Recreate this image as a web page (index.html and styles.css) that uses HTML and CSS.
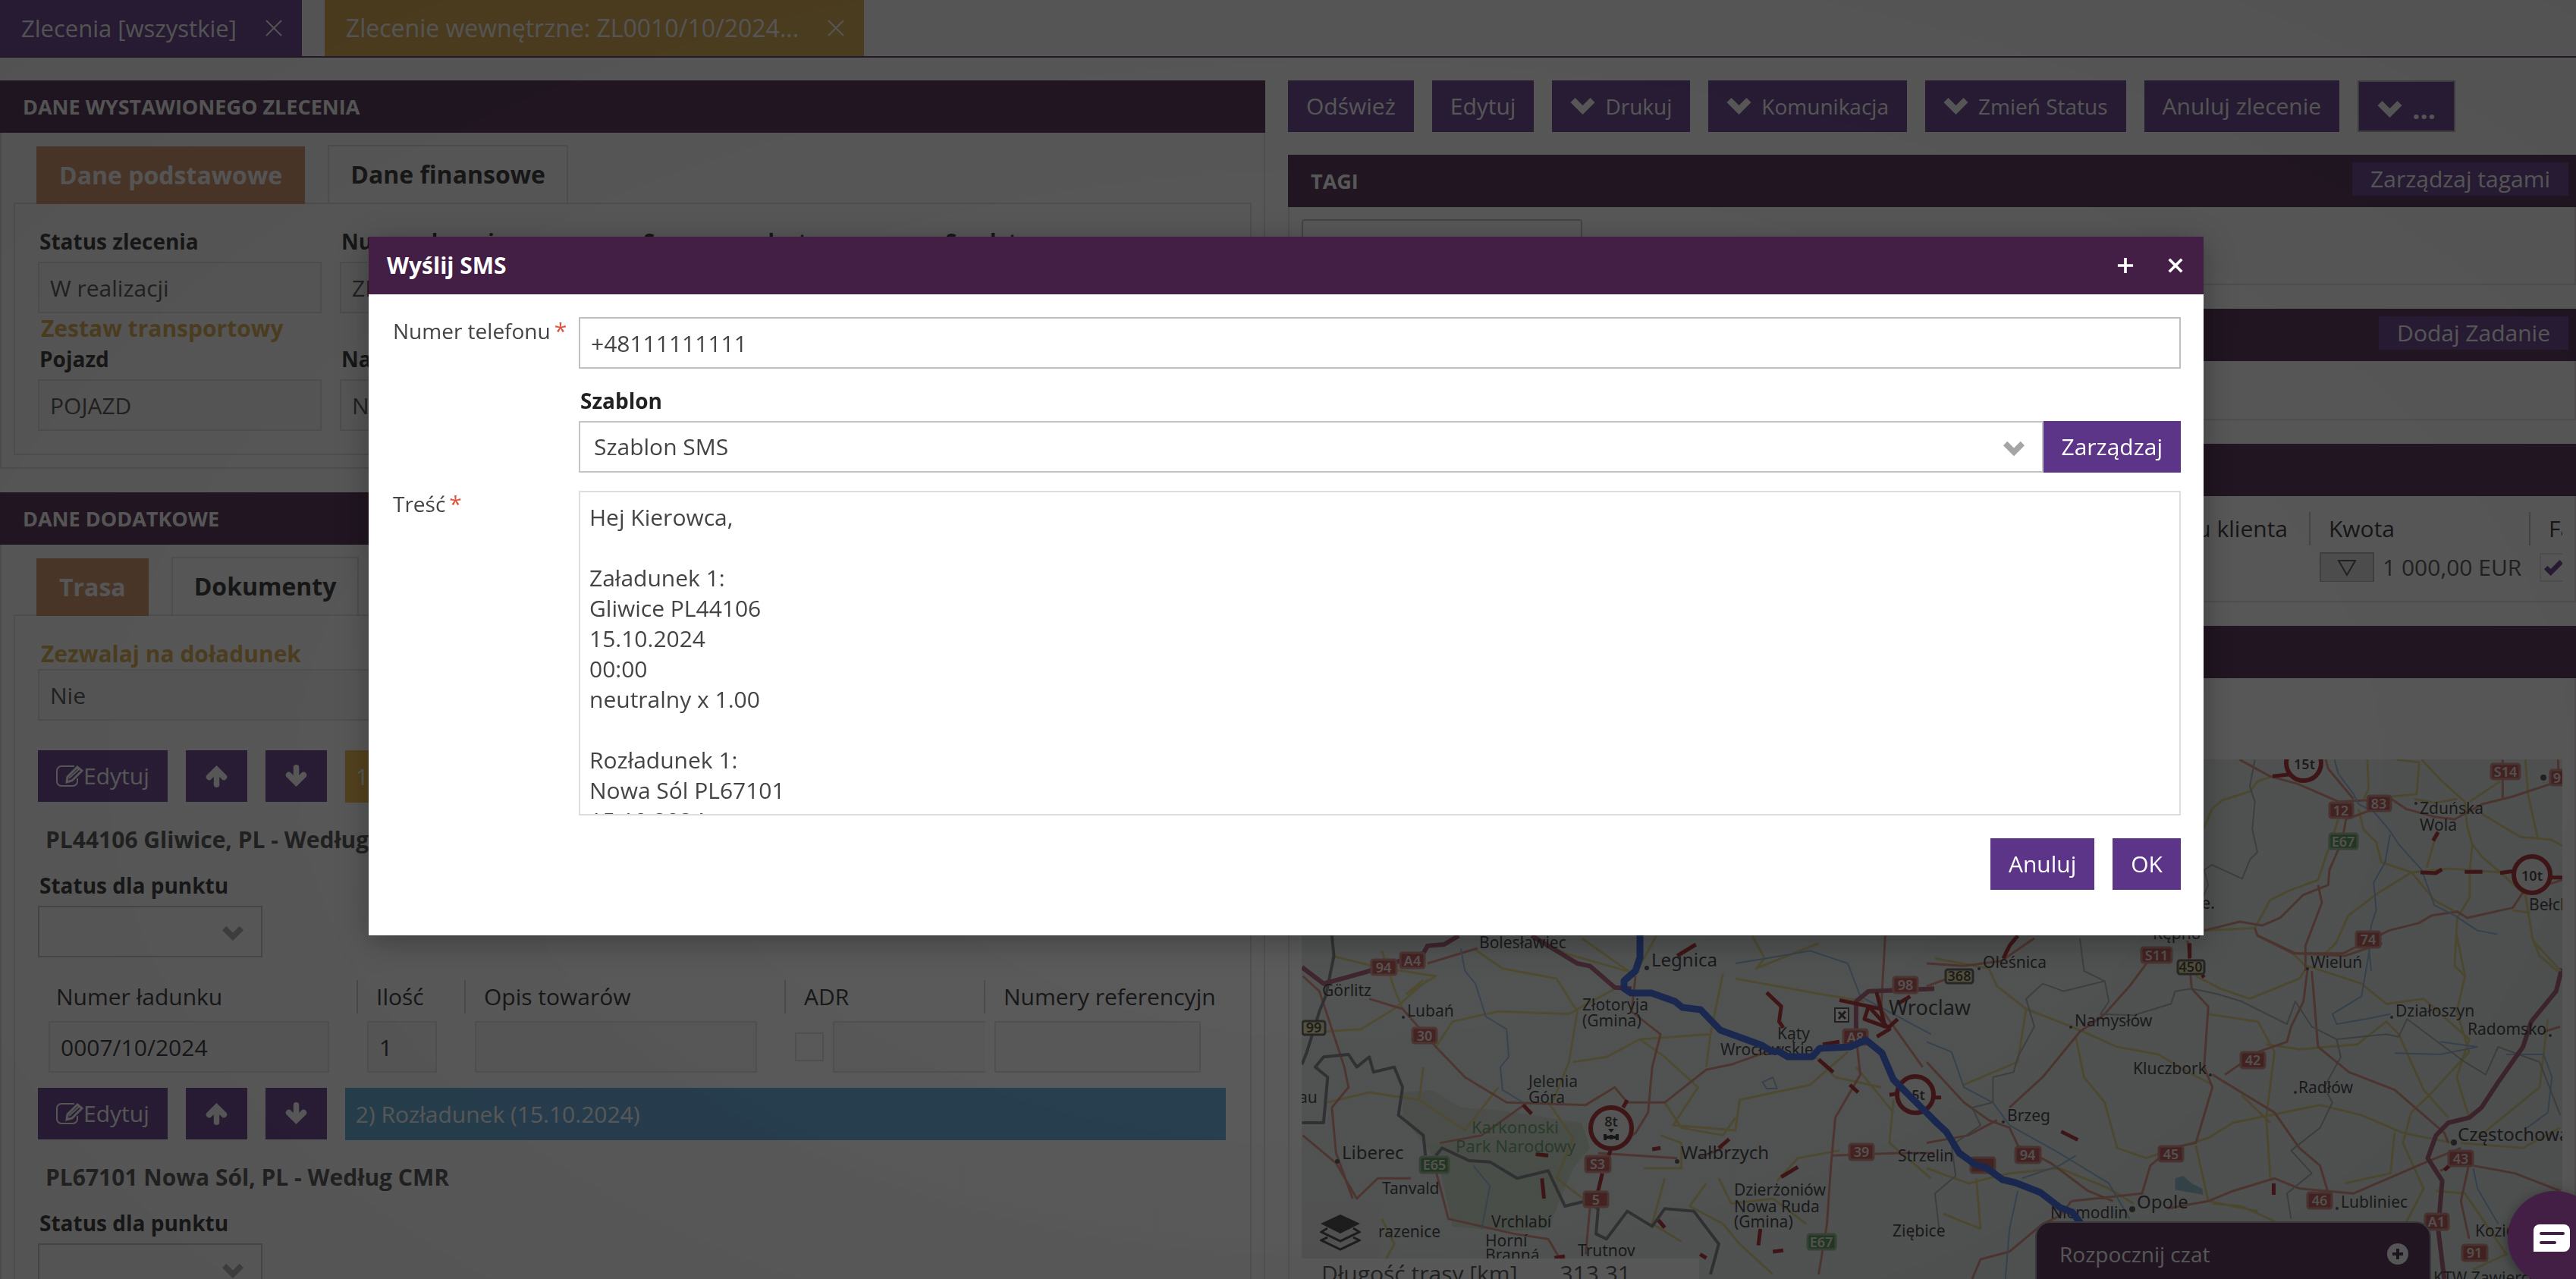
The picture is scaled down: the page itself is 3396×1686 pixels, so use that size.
FILE: index.html
```html
<!DOCTYPE html>
<html lang="pl">
<head>
<meta charset="utf-8">
<title>Zlecenie wewnętrzne ZL0010/10/2024</title>
<meta name="viewport" content="width=device-width, initial-scale=1">
<link rel="stylesheet" href="styles.css">
</head>
<body>
<svg class="symbols" aria-hidden="true">
  <symbol id="i-chevron" viewBox="0 0 32 24"><path d="M3 4 16 17 29 4" fill="none" stroke="currentColor" stroke-width="8.5"/></symbol>
  <symbol id="i-up" viewBox="0 0 32 32"><path d="M16 28V10" stroke="currentColor" stroke-width="8" stroke-linecap="round"/><path d="M16 1 30 15c3 4-3 9-6 6l-8-8-8 8c-3 3-9-2-6-6z" fill="currentColor"/></symbol>
  <symbol id="i-down" viewBox="0 0 32 32"><path d="M16 4V22" stroke="currentColor" stroke-width="8" stroke-linecap="round"/><path d="M16 31 30 17c3-4-3-9-6-6l-8 8-8-8c-3-3-9 2-6 6z" fill="currentColor"/></symbol>
  <symbol id="i-edit" viewBox="0 0 36 30"><path d="M24 2H7a6 6 0 0 0-6 6v14a6 6 0 0 0 6 6h15a6 6 0 0 0 6-6v-4" fill="none" stroke="currentColor" stroke-width="2"/><path d="M15 16 28 3l6 5-13 13-7 2z" fill="none" stroke="currentColor" stroke-width="3"/><path d="m17 18 13-12" stroke="currentColor" stroke-width="2"/></symbol>
  <symbol id="i-cross" viewBox="0 0 24 24"><path d="M2 2 22 22M22 2 2 22" stroke="currentColor" stroke-width="2"/></symbol>
</svg>

<nav class="doc-tabs">
  <a class="doc-tab" href="#list">Zlecenia [wszystkie]<svg class="doc-close"><use href="#i-cross"/></svg></a>
  <a class="doc-tab doc-tab-gold" href="#order">Zlecenie wewnętrzne: ZL0010/10/2024...<svg class="doc-close"><use href="#i-cross"/></svg></a>
</nav>

<main class="columns">
  <div class="column">
    <section class="panel">
      <h2 class="panel-head">DANE WYSTAWIONEGO ZLECENIA</h2>
      <div class="panel-body">
        <div class="tabs"><a class="tab tab-active" href="#basic">Dane podstawowe</a><a class="tab" href="#finance">Dane finansowe</a></div>
        <div class="inner">
          <div class="fields">
            <div class="field"><label class="label" for="f1">Status zlecenia</label><input class="input" id="f1" value="W realizacji" readonly></div>
            <div class="field"><label class="label" for="f2">Numer zlecenia</label><input class="input" id="f2" value="ZL0010/10/2024" readonly></div>
            <div class="field"><label class="label" for="f3">Suma zaw. dostaw</label><input class="input" id="f3" readonly></div>
            <div class="field"><label class="label" for="f4">Spedytor</label><input class="input" id="f4" readonly></div>
          </div>
          <h3 class="gold">Zestaw transportowy</h3>
          <div class="fields">
            <div class="field"><label class="label" for="f5">Pojazd</label><input class="input" id="f5" value="POJAZD" readonly></div>
            <div class="field"><label class="label" for="f6">Naczepa</label><input class="input" id="f6" value="NACZEPA" readonly></div>
          </div>
        </div>
      </div>
    </section>

    <section class="panel">
      <h2 class="panel-head">DANE DODATKOWE</h2>
      <div class="panel-body">
        <div class="tabs"><a class="tab tab-active" href="#route">Trasa</a><a class="tab" href="#docs">Dokumenty</a></div>
        <div class="inner">
          <label class="gold gold-label" for="f7">Zezwalaj na doładunek</label>
          <input class="input" id="f7" value="Nie" readonly>
          <div class="stop stop-first">
            <div class="stop-bar">
              <button class="btn" type="button"><svg class="ico-edit"><use href="#i-edit"/></svg>Edytuj</button>
              <button class="btn" type="button" aria-label="W górę"><svg class="ico-arrow"><use href="#i-up"/></svg></button>
              <button class="btn" type="button" aria-label="W dół"><svg class="ico-arrow"><use href="#i-down"/></svg></button>
              <div class="stop-title stop-load">1) Załadunek (15.10.2024)</div>
            </div>
            <p class="place">PL44106 Gliwice, PL - Według CMR</p>
            <label class="label" for="s1">Status dla punktu</label>
            <div class="select select-short"><select id="s1"><option></option></select><svg class="caret"><use href="#i-chevron"/></svg></div>
            <table class="goods">
              <colgroup><col class="g1"><col class="g2"><col class="g1"><col class="g4"><col></colgroup>
              <thead><tr><th>Numer ładunku</th><th>Ilość</th><th>Opis towarów</th><th>ADR</th><th>Numery referencyjn</th></tr></thead>
              <tbody><tr>
                <td><input class="input w-num" aria-label="Numer ładunku" value="0007/10/2024" readonly></td>
                <td><input class="input w-qty" aria-label="Ilość" value="1" readonly></td>
                <td><input class="input w-desc" aria-label="Opis towarów" readonly></td>
                <td><div class="adr"><input class="check" type="checkbox" aria-label="ADR"><input class="input w-adr" aria-label="Klasa ADR" readonly></div></td>
                <td><input class="input w-ref" aria-label="Numery referencyjne" readonly></td>
              </tr></tbody>
            </table>
          </div>
          <div class="stop">
            <div class="stop-bar">
              <button class="btn" type="button"><svg class="ico-edit"><use href="#i-edit"/></svg>Edytuj</button>
              <button class="btn" type="button" aria-label="W górę"><svg class="ico-arrow"><use href="#i-up"/></svg></button>
              <button class="btn" type="button" aria-label="W dół"><svg class="ico-arrow"><use href="#i-down"/></svg></button>
              <div class="stop-title stop-unload">2) Rozładunek (15.10.2024)</div>
            </div>
            <p class="place">PL67101 Nowa Sól, PL - Według CMR</p>
            <label class="label" for="s2">Status dla punktu</label>
            <div class="select select-short"><select id="s2"><option></option></select><svg class="caret"><use href="#i-chevron"/></svg></div>
          </div>
        </div>
      </div>
    </section>
  </div>

  <div class="column">
    <div class="toolbar">
      <button class="btn" type="button">Odśwież</button>
      <button class="btn" type="button">Edytuj</button>
      <button class="btn btn-menu" type="button"><svg class="ico-chevron"><use href="#i-chevron"/></svg>Drukuj</button>
      <button class="btn btn-menu" type="button"><svg class="ico-chevron"><use href="#i-chevron"/></svg>Komunikacja</button>
      <button class="btn btn-menu" type="button"><svg class="ico-chevron"><use href="#i-chevron"/></svg>Zmień Status</button>
      <button class="btn" type="button">Anuluj zlecenie</button>
      <button class="btn btn-menu btn-more" type="button"><svg class="ico-chevron"><use href="#i-chevron"/></svg>...</button>
    </div>
    <section class="panel">
      <div class="panel-head"><h2 class="panel-title">TAGI</h2><button class="btn btn-head" type="button">Zarządzaj tagami</button></div>
      <div class="panel-body tags"><input class="tag-input" aria-label="Tag"></div>
    </section>
    <section class="panel">
      <div class="panel-head"><h2 class="panel-title">ZADANIA</h2><button class="btn btn-head" type="button">Dodaj Zadanie</button></div>
      <div class="panel-body tasks"></div>
    </section>
    <section class="panel">
      <h2 class="panel-head">ROZLICZENIA</h2>
      <div class="panel-body pay-body">
        <table class="pay">
          <colgroup><col><col class="p2"><col class="p3"></colgroup>
          <thead><tr><th class="pay-first">Numer u klienta</th><th>Kwota</th><th>Faktura</th></tr></thead>
          <tbody><tr><td></td><td><div class="amount"><button class="btn-drop" type="button" aria-label="Szczegóły"><svg viewBox="0 0 26 24"><path d="M2 2H24L13 21z" fill="none" stroke="currentColor" stroke-width="2"/></svg></button>1 000,00 EUR</div></td>
          <td><div class="tick"><svg viewBox="0 0 24 20"><path d="m2 10 6 6L21 3" fill="none" stroke="currentColor" stroke-width="6"/></svg></div></td></tr></tbody>
        </table>
      </div>
    </section>
    <section class="panel">
      <h2 class="panel-head">MAPA</h2>
      <div class="panel-body map-body">
        <div class="map">
          <svg class="map-svg" viewBox="1716 1001 1662 700" preserveAspectRatio="xMinYMin slice" role="img" aria-label="Mapa trasy">
            <rect x="1716" y="1001" width="1662" height="700" fill="#e2e7e7"/>
            <g class="tile" transform="translate(1690 1220) scale(.5485 .3333)">
              <path class="park" d="M290 660 360 650 430 720 520 730 720 780 740 880 700 960 640 1200 540 1210 410 1190 380 960 345 870 290 760z"/>
              <path class="y" d="M120 120 230 165 370 200 300 270 340 215M460 90 530 170 660 210 710 340 690 540 650 700M100 420 190 410 270 330 350 215M370 480 410 380 520 340 690 350 800 250M340 560 330 690 440 810 520 640M240 100 270 250 290 330M700 540 780 520 860 450 1030 430 1060 190M600 40 680 110 850 190 900 40M720 50 850 200M1030 430 1020 560M860 450 920 520 1000 640 940 790 1090 810 1100 690 1270 630 1360 500M920 700 960 800 1060 830 1090 760M910 830 960 860 960 960 870 960M1090 210 1290 270 1400 300M1380 560 1470 740M1470 690 1460 860 1560 1000M1340 890 1240 920 1190 1010M1050 1000 1080 1100 1180 1080 1260 1180M640 700 700 840 660 1000 740 1100M110 700 210 660 330 690M920 1000 890 1180 960 1250M1020 1020 980 1110 1060 1180 1100 1260 1180 1380M240 1160 270 1260 230 1380M1440 640 1330 600 1270 500M1130 40 1160 130 1140 170 1290 70"/>
              <path class="o" d="M50 200 90 260 150 560 160 640 120 720 130 900 170 1080M210 290 290 330 370 480 440 600 540 700 730 710 800 640 830 700 920 700 1020 570 1080 550 1200 480M350 150 470 90M850 200 840 340 910 430 890 560 880 740 850 820 790 890M770 1000 740 1120 730 1300M380 860 480 830 590 700M50 830 130 940 180 1080 230 1000 310 1000M1450 40 1440 330 1540 560M1380 440 1390 590 1330 760 1320 940 1310 1180 1290 1380M1320 910 1480 900 1568 900M370 970 400 1160 560 1220 640 1240 690 1380M760 900 950 920M1060 880 1000 920"/>
              <path class="river" d="M430 90 440 180 465 230 490 360 540 410 545 520 525 560 530 650 580 700M1090 150 1200 120 1270 100 1360 150 1390 280 1560 430M460 950 500 1030 480 1200M1180 600l-25 20 10 25 25 0z"/>
              <path class="border" d="M120 40 125 120 105 280 90 340 60 500 48 550M48 780 100 780 110 600 80 560 100 520 160 510 180 560 210 520 220 580 270 560 290 640 280 750 340 830 345 910M370 910 385 880 450 930 500 935 565 1000 640 970 680 1110 730 1090 760 1120 755 1220 780 1240 830 1130 890 1190 920 1120 990 1130 1050 1260 1030 1380"/>
              <path class="m" d="M48 165 100 230 200 185 340 110 350 80 390 75 425 40M600 40 710 150 740 160 800 245 840 250M1380 440 1380 300 1410 260 1568 250"/>
              <path class="closed" d="M1165 265 1200 320 1195 380 1205 405M1300 470 1340 460M1340 295 1440 330 1430 270 1450 400 1400 370 1410 320 1460 410 1430 440M1480 370 1460 400M1510 280 1480 310M1290 530 1325 580M1365 630 1385 660M950 120 995 75M580 710 600 745M610 905 640 910M890 885 910 880M1050 880 1075 845M1200 995 1240 955M625 1000 630 1080M770 980 760 1050M905 1165 920 1195M1150 1200 1145 1265M1180 1290 1205 1285M820 720 830 690M790 890 785 910M1460 670 1480 665M655 1315 680 1308M1005 1300 1020 1315"/>
            </g>
            <g class="tile" transform="translate(2540 1220) scale(.5459 .3333)">
              <path class="y" d="M20 130 150 170 170 240 240 330 350 400 460 480 560 510 620 570 690 630M240 330 220 540 90 630M360 440 380 600 430 700 460 880 530 920 620 870 680 840 740 780 950 710 1050 750 1150 820 1270 860M680 350 800 380 840 500 820 760 830 1000M650 200 710 250 780 290 900 210 920 160 1050 230 1110 310 1200 290 1310 450 1280 600 1310 760M820 470 900 490 1040 470 1110 380 1140 430 1200 650 1260 760M1280 40 1300 200 1280 340 1310 500 1220 660 1170 740 1150 860 1200 1040 1150 1200M1460 40 1480 120 1530 190M1290 860 1440 880 1530 800M1330 840 1480 640 1500 370M0 960 100 1020 200 980 320 960 440 1040 500 1100M650 870 680 1090 800 1130M760 670 830 780M690 1100 760 1110 880 1200M1010 1020 1120 980 1130 820M120 1000 130 1200 40 1140M1230 1050 1300 1060 1400 1300 1320 1360M1530 1100 1400 1200"/>
              <path class="o" d="M0 150 90 160 180 140 260 50M0 240 100 180M540 130 490 240 430 350 370 420 340 480 280 600 200 720M630 60 640 250 680 320 670 560 690 640 650 860 590 880 540 950 520 1060 350 1090M800 40 890 110 1010 120 1100 70M920 170 910 300 880 400 870 460 800 500 720 590M930 180 945 480 1020 580 1130 650 1250 820 1260 860M690 590 760 660 840 740 900 880 950 950 970 1060M0 540 90 700 150 770 200 800 220 870 300 940 390 1050 450 1090M0 860 100 830 170 770M580 1120 680 1090 740 1050 840 1000 900 1040 1030 1060 1200 940 1290 880M1320 950 1420 980 1530 1050M1310 940 1290 1090 1310 1240M350 1090 320 1150 280 1180 200 1290 130 1320 110 1398M1490 420 1530 400M1240 970 1280 940"/>
              <path class="river" d="M0 460 60 500 90 640 160 700 200 790 320 900 440 1020 490 1160M1070 90 1050 280 980 350 990 390 1060 370 1120 350M1240 460 1330 480 1240 510 1130 505M1400 510 1490 510 1510 600 1500 740 1450 800M230 1000 320 950 360 910M220 1050 200 1200 190 1398M1320 960 1330 1040 1380 1180"/>
              <path class="lake" d="M600 1000 620 990 640 1020 665 1040 668 1065 600 1045z"/>
              <path class="area" d="M370 50 380 180 430 220 440 300 420 350 500 355 590 310 600 260 640 250 700 270 760 300 870 390 890 300 930 400 990 450 1110 430 1140 440 1160 370 1250 480 1300 540 1350 590 1380 480 1480 540 1530 750M430 220 330 260 280 230 240 290 260 400 220 520 210 580 160 600 160 700 110 720 130 790 60 870 70 990 20 1060 30 1200M990 450 1000 520 960 640 980 700 950 800 880 890 930 980 870 1060 880 1160"/>
              <path class="m" d="M1534 170 1520 260 1460 380 1440 480 1380 620 1340 720 1310 760 1260 780 1230 830 1210 920 1245 1010 1235 1200 1250 1398"/>
              <path class="closed" d="M220 40 200 80 185 130M635 70 635 130M665 195 670 205M325 815 365 848M838 1020 838 1065M1250 968 1262 950M0 610 15 680 35 680"/>
            </g>
            <g class="tile" transform="translate(2896 980) scale(.3333)">
              <path class="y" d="M0 360 30 330 60 260 100 225 210 190 240 150 300 130M675 64 680 180 660 220M790 64 880 75 870 200 770 210M890 64 970 150 1060 230 1070 330 1090 400 1080 500 1080 610 1030 690 1020 880 1060 920M1080 230 1200 150M860 220 940 235 1030 220M560 300 520 420 480 540 370 580 290 620 230 730 30 740M640 260 660 340 710 390 730 470 850 510 1000 495 1200 510M850 510 720 590 600 680 550 790 510 830 380 830 430 880M850 510 940 620 1030 670M1090 400 1130 450 1200 510 1300 600 1330 780 1440 900M1300 64 1310 200 1350 380M1130 280 1280 370 1400 380 1446 405M950 350 910 490M1250 660 1320 670"/>
              <path class="o" d="M170 64 290 130 400 160 560 230 770 220 830 260 940 290 1020 300 1130 240 1250 210 1400 160M510 64 520 100 620 220M700 260 590 300 580 360M560 420 525 500 520 560 420 600 330 690 260 720 170 705 30 740M480 560 495 630 430 800 430 900M230 730 240 760 380 830 580 830 700 770 760 740 880 710 930 680 1030 665 1070 690 1250 650 1290 590 1446 540M1210 64V220M1430 64V110"/>
              <path class="river" d="M545 64 560 120 620 200 640 240 700 270 760 340 800 400 890 500 940 640 1020 680 1110 740 1190 755M765 360 745 470 700 550 710 660 690 720 680 800 690 900"/>
              <path class="area" d="M230 64 210 170 230 230 220 340 240 430 210 460 180 535 60 480 30 500 45 560 20 620"/>
              <path class="closed" d="M300 130 370 122M955 350 935 385M885 510 945 513 970 498M1060 508H1130M1200 512 1255 505M1400 530H1446"/>
            </g>
            <g class="signs">
              <circle cx="2124" cy="1487" r="27"/><circle cx="2525" cy="1443" r="24"/><circle cx="3037" cy="1006" r="23"/><circle cx="3338" cy="1153" r="24"/>
            </g>
            <path d="M2114 1499h20M2116 1495v8M2132 1495v8M2124 1496v6" stroke="#222" stroke-width="4"/><path d="M2120 1488h8l-4 5z" fill="#222"/>
            <rect x="2419" y="1329" width="18" height="18" fill="#fff" stroke="#444" stroke-width="2"/><path d="m2424 1343 9-10M2424 1334l9 9" stroke="#333" stroke-width="3"/>
            <g class="shields">
              <rect x="1808" y="1265" width="33" height="20"/><rect x="1846" y="1256" width="32" height="20"/><rect x="1862" y="1355" width="32" height="20"/><rect x="2090" y="1524" width="33" height="21"/><rect x="2088" y="1571" width="32" height="20"/><rect x="2430" y="1357" width="32" height="20"/><rect x="2496" y="1288" width="32" height="21"/><rect x="2438" y="1508" width="32" height="21"/>
              <rect x="2823" y="1249" width="40" height="20"/><rect x="3106" y="1228" width="32" height="21"/><rect x="2954" y="1387" width="32" height="21"/><rect x="2598" y="1526" width="32" height="20"/><rect x="2657" y="1512" width="33" height="21"/><rect x="2846" y="1511" width="32" height="20"/><rect x="3042" y="1572" width="32" height="21"/><rect x="3228" y="1517" width="32" height="20"/><rect x="3197" y="1600" width="31" height="21"/><rect x="3246" y="1641" width="33" height="21"/>
              <rect x="3284" y="1007" width="38" height="20"/><rect x="3362" y="1015" width="32" height="20"/><rect x="3121" y="1049" width="31" height="20"/><rect x="3071" y="1058" width="31" height="20"/>
            </g>
            <g class="shields green"><rect x="1872" y="1525" width="38" height="21"/><rect x="2383" y="1627" width="37" height="20"/><rect x="3071" y="1099" width="37" height="20"/></g>
            <g class="shields yellow"><rect x="1717" y="1346" width="30" height="18"/><rect x="2565" y="1278" width="36" height="18"/><rect x="2871" y="1266" width="35" height="18"/></g>
            <g class="nums">
              <text x="1824" y="1282">94</text><text x="1862" y="1273">A4</text><text x="1878" y="1372">30</text><text x="2106" y="1541">S3</text><text x="2104" y="1588">5</text><text x="2446" y="1374">A8</text><text x="2512" y="1305">98</text><text x="2454" y="1525">39</text><text x="2843" y="1266">S11</text><text x="3122" y="1245">74</text><text x="2970" y="1404">42</text><text x="2673" y="1529">94</text><text x="2862" y="1528">45</text><text x="3058" y="1589">46</text><text x="3244" y="1534">43</text><text x="3212" y="1617">A1</text><text x="3262" y="1658">91</text><text x="3303" y="1024">S14</text><text x="3371" y="1032">9</text><text x="3136" y="1066">83</text><text x="3086" y="1075">12</text><text x="1891" y="1542">E65</text><text x="2401" y="1644">E67</text><text x="3089" y="1116">E67</text>
            </g>
            <g class="nums dark"><text x="1732" y="1361">99</text><text x="2583" y="1293">368</text><text x="2888" y="1281">450</text><text x="2124" y="1485">8t</text><text x="2529" y="1450">5t</text><text x="3038" y="1014">15t</text><text x="3338" y="1161">10t</text></g>
            <g class="towns">
              <text x="1950" y="1250">Bolesławiec</text><text x="1743" y="1313">Görlitz</text><text x="1855" y="1340">Lubań</text><text x="2086" y="1332">Złotoryja</text><text x="2086" y="1353">(Gmina)</text><text x="2343" y="1370">Kąty</text><text x="2268" y="1391">Wrocławskie</text><text x="2015" y="1433">Jelenia</text><text x="2015" y="1454">Góra</text><text x="1822" y="1574">Tanvald</text><text x="1712" y="1454">au</text><text x="2286" y="1576">Dzierżoniów</text><text x="2286" y="1598">Nowa Ruda</text><text x="2286" y="1618">(Gmina)</text><text x="1966" y="1618">Vrchlabí</text><text x="1817" y="1631">razenice</text><text x="1958" y="1643">Horní</text><text x="1958" y="1662">Branná</text><text x="2080" y="1656">Trutnov</text><text x="2495" y="1630">Ziębice</text><text x="2502" y="1531">Strzelin</text>
              <text x="2614" y="1276">Oleśnica</text><text x="2838" y="1238">Kępno</text><text x="2735" y="1353">Namysłów</text><text x="3158" y="1340">Działoszyn</text><text x="2812" y="1416">Kluczbork</text><text x="3030" y="1441">Radłów</text><text x="2646" y="1478">Brzeg</text><text x="3086" y="1592">Lubliniec</text><text x="2703" y="1606">Niemodlin</text><text x="3263" y="1630">Koziegłowy</text><text x="3208" y="1692">KTW Zawiercie</text><text x="3190" y="1073">Zduńska</text><text x="3190" y="1095">Wola</text><text x="2870" y="1198">Syce.</text><text x="3334" y="1200">Bełchatów</text><text x="3253" y="1364">Radomsko</text><text x="3046" y="1276">Wieluń</text>
            </g>
            <g class="towns big">
              <text x="2177" y="1274">Legnica</text><text x="1769" y="1528">Liberec</text><text x="2216" y="1528">Wałbrzych</text><text x="2817" y="1593">Opole</text><text x="3240" y="1504">Częstochowa</text>
            </g>
            <g class="towns city"><text x="2490" y="1338">Wroclaw</text></g>
            <g class="towns parks"><text x="1940" y="1494">Karkonoski</text><text x="1919" y="1519">Park Narodowy</text></g>
            <g class="dots"><circle cx="2171" cy="1276" r="3"/><circle cx="1763" cy="1531" r="3"/><circle cx="2211" cy="1531" r="3"/><circle cx="2811" cy="1594" r="4"/><circle cx="3235" cy="1506" r="4"/><circle cx="1850" cy="1341" r="2"/><circle cx="2609" cy="1277" r="2"/><circle cx="2730" cy="1354" r="2"/><circle cx="2914" cy="1417" r="2"/><circle cx="3026" cy="1440" r="2"/><circle cx="2641" cy="1479" r="2"/><circle cx="3081" cy="1593" r="2"/><circle cx="3042" cy="1277" r="2"/><circle cx="3185" cy="1059" r="2"/><circle cx="3153" cy="1341" r="2"/><circle cx="3362" cy="1365" r="2"/><circle cx="3353" cy="1025" r="4"/></g>
            <path class="route" d="M2162 1200V1262L2156 1280 2141 1293V1303L2150 1309H2177L2208 1320 2218 1328 2242 1331 2268 1358 2323 1378 2336 1386H2345L2357 1393H2389L2399 1382 2439 1380 2460 1371 2481 1388 2496 1423 2553 1480 2566 1492 2583 1520 2604 1535 2618 1539 2640 1555 2657 1559 2690 1572 2716 1592 2732 1598 2744 1614"/>
          </svg>
          <button class="layers" type="button" aria-label="Warstwy"><svg viewBox="0 0 54 50"><path d="M27 1 53 13 27 26 1 13z" fill="currentColor"/><path d="M10 19 2 24 27 36 52 24 44 19M10 31 2 35 27 47 52 35 44 31" fill="none" stroke="currentColor" stroke-width="3"/></svg></button>
          <dl class="route-info"><dt>Długość trasy [km]</dt><dd>313,31</dd></dl>
        </div>
      </div>
    </section>
  </div>
</main>

<button class="chat" type="button">Rozpocznij czat<svg viewBox="0 0 28 28"><circle cx="14" cy="14" r="14" fill="currentColor"/><path d="M14 7v14M7 14h14" stroke="#3d1c3c" stroke-width="4"/></svg></button>

<div class="overlay"></div>

<form class="dialog" role="dialog" aria-labelledby="dlg-title">
  <header class="dialog-head">
    <h2 id="dlg-title">Wyślij SMS</h2>
    <button type="button" class="dialog-icon" aria-label="Powiększ"><svg viewBox="0 0 24 24"><path d="M12 1v22M1 12h22" stroke="currentColor" stroke-width="4"/></svg></button>
    <button type="button" class="dialog-icon" aria-label="Zamknij"><svg viewBox="0 0 24 24"><path d="m3 3 18 18M21 3 3 21" stroke="currentColor" stroke-width="4"/></svg></button>
  </header>
  <div class="dialog-body">
    <label class="dlabel" for="d1">Numer telefonu<span class="req">*</span></label>
    <input class="input dinput" id="d1" value="+48111111111">
    <div class="template">
      <label class="label" for="d2">Szablon</label>
      <div class="template-row">
        <div class="select"><select id="d2"><option>Szablon SMS</option></select><svg class="caret"><use href="#i-chevron"/></svg></div>
        <button class="btn" type="button">Zarządzaj</button>
      </div>
    </div>
    <label class="dlabel dlabel-message" for="d3">Treść<span class="req">*</span></label>
    <textarea class="message" id="d3">Hej Kierowca,

Załadunek 1:
Gliwice PL44106
15.10.2024
00:00
neutralny x 1.00

Rozładunek 1:
Nowa Sól PL67101
15.10.2024</textarea>
    <div class="actions"><button class="btn" type="button">Anuluj</button><button class="btn" type="submit">OK</button></div>
  </div>
</form>

<button class="fab" type="button" aria-label="Wiadomości"><svg viewBox="0 0 48 36"><path d="M8 0H40a8 8 0 0 1 8 8V28a8 8 0 0 1-8 8H0V8a8 8 0 0 1 8-8z" fill="#fff"/><path d="M10 12h29M10 24h18" stroke="#431e45" stroke-width="4" stroke-linecap="round"/></svg></button>
</body>
</html>
```
FILE: styles.css
```css
* { box-sizing: border-box; }

body {
  margin: 0;
  height: 100vh;
  overflow: hidden;
  position: relative;
  background: #fff;
  color: #444;
  font: 30px/40px "Open Sans", "Noto Sans", sans-serif;
}

button, input, select, textarea { font: inherit; color: inherit; }
h2, h3, p, dl, dd { margin: 0; }
svg { display: block; }
a { color: inherit; text-decoration: none; }
.symbols { position: absolute; width: 0; height: 0; }

/* document tabs */
.doc-tabs { display: flex; gap: 30px; height: 76px; border-bottom: 2px solid #5a2b5c; }
.doc-tab { display: flex; align-items: center; gap: 37px; padding: 0 25px 0 28px; background: #5c3488; color: #fff; font-size: 31px; }
.doc-tab-gold { background: #d9a540; font-size: 32px; }
.doc-close { width: 24px; height: 24px; }

.columns { display: grid; grid-template-columns: 1668fr 1698fr; column-gap: 30px; padding-top: 30px; }
.column { display: flex; flex-direction: column; gap: 31px; min-width: 0; }

/* panels */
.panel-head { display: flex; align-items: center; justify-content: space-between; height: 69px; padding: 0 10px 0 30px; background: #431e45; color: #fff; font-size: 27px; font-weight: 700; }
.panel-title { font-size: 27px; }
.panel-body { border: 2px solid #e2dcdc; border-top: 0; padding: 16px; }

.tabs { display: flex; gap: 30px; padding-left: 30px; height: 76px; }
.tab { display: flex; align-items: center; height: 76px; padding: 0 28px; border: 2px solid #e2dcdc; border-bottom: 0; color: #222; font-size: 32px; font-weight: 700; }
.tab-active { position: relative; margin-top: 2px; padding: 0 30px; border: 0; background: #d28d5d; color: #fff; }
.inner { border: 2px solid #e2dcdc; padding: 29px 30px 30px; }

.fields { display: grid; grid-template-columns: repeat(4, 374px); gap: 24px; }
.label { display: block; margin-bottom: 7px; padding-left: 2px; color: #222; font-size: 28px; font-weight: 700; }
.gold { display: block; padding-left: 4px; color: #d9a540; font-size: 30px; font-weight: 700; }
.gold-label { padding-top: 1px; }
.input { display: block; width: 100%; height: 68px; padding: 0 14px; border: 2px solid #e2dcdc; border-radius: 0; background: #f9f9f9; }

.btn { display: flex; align-items: center; height: 68px; padding: 0 24px; border: 0; background: #5c3488; color: #fff; }
.btn-menu { gap: 13px; font-size: 28px; }
.btn-more { border: 2px solid #aaa; padding: 8px 24px 0; font-size: 36px; font-weight: 700; }
.btn-head { align-self: flex-start; height: 44px; margin-top: 10px; font-weight: 400; font-size: 30px; }
.ico-chevron { width: 33px; height: 24px; }
.ico-arrow { width: 33px; height: 30px; }
.ico-edit { width: 36px; height: 30px; }
.toolbar { display: flex; gap: 24px; margin-bottom: -1px; }

/* stops */
.stop { margin-top: 20px; }
.stop-first { margin-top: 39px; }
.stop-bar { display: flex; gap: 24px; height: 68px; }
.stop-title { flex: 1; height: 69px; margin-right: 2px; padding-left: 14px; line-height: 69px; color: #fff; }
.stop-load { background: #eeb33e; }
.stop-unload { background: #56a3d8; }
.place { margin: 30px 0 20px 10px; font-weight: 700; }

.select { display: grid; align-items: center; flex: 1; }
.select select { grid-area: 1 / 1; width: 100%; height: 68px; padding: 0 18px; border: 2px solid #c4c4c4; border-radius: 0; background: #fff; appearance: none; }
.caret { grid-area: 1 / 1; justify-self: end; width: 28px; height: 21px; margin: 4px 25px 0 0; color: #a5a5a5; pointer-events: none; }
.select-short { width: 296px; }

.goods { width: 100%; margin-top: 30px; table-layout: fixed; border-collapse: separate; border-spacing: 0; color: #222; }
.g1 { width: 422px; }
.g2 { width: 142px; }
.g4 { width: 263px; }
th { height: 44px; padding: 0 0 0 24px; border-right: 2px solid #ccc; text-align: left; font-weight: 400; white-space: nowrap; overflow: hidden; color: #222; }
th:last-child { border-right: 0; }
.goods td { padding: 10px 0 0 12px; overflow: hidden; }
.goods td:first-child { padding-left: 14px; }
.w-num { width: 370px; }
.w-qty { width: 92px; }
.w-desc { width: 372px; }
.w-ref { width: 272px; }
.w-adr { width: 201px; border-right: 0; }
.adr { display: flex; align-items: center; gap: 12px; }
.check { flex: none; width: 38px; height: 38px; margin: 0; border: 2px solid #e2dcdc; background: #fff; appearance: none; }

/* right column */
.tags { height: 103px; padding: 16px; }
.tag-input { display: block; width: 370px; height: 68px; border: 2px solid #bbb; border-radius: 4px; background: #fff; }
.tasks { height: 78px; }
.pay-body { height: 140px; padding: 21px 16px 0; }
.pay { width: 100%; table-layout: fixed; border-spacing: 0; }
.pay .pay-first { padding-right: 28px; text-align: right; }
.p2 { width: 290px; }
.p3 { width: 42px; }
.pay td { padding: 10px 0 0 12px; overflow: hidden; }
.pay th { border-color: #bbb; }
.amount { display: flex; align-items: center; gap: 11px; height: 38px; white-space: nowrap; }
.btn-drop { display: flex; justify-content: center; align-items: center; width: 72px; height: 40px; padding: 2px 0 0; border: 2px solid #aaa; background: #ddd; }
.btn-drop svg { width: 26px; height: 24px; }
.tick { display: flex; align-items: center; width: 38px; height: 38px; padding-left: 4px; border: 2px solid #e2dcdc; color: #5c3488; }
.tick svg { width: 26px; height: 22px; }

/* map */
.map-body { padding: 107px 16px 0; }
.map { position: relative; height: 700px; overflow: hidden; }
.map-svg { width: 100%; height: 700px; }
.tile path { fill: none; vector-effect: non-scaling-stroke; stroke-linejoin: round; }
.tile .y { stroke: #d8cc78; stroke-width: 3; }
.tile .o { stroke: #d88674; stroke-width: 3; }
.tile .m { stroke: #a4506e; stroke-width: 6; }
.tile .river { stroke: #8ab4dc; stroke-width: 2; }
.tile .lake { fill: #8ab4cc; }
.tile .park { fill: #cbd8c8; }
.tile .border { stroke: #77777f; stroke-width: 4; }
.tile .area { stroke: #a2a6a4; stroke-width: 2; }
.tile .closed { stroke: #a81c20; stroke-width: 5; }
.signs circle { fill: #f2f2f2; stroke: #a81c20; stroke-width: 6; }
.shields rect { fill: #b84a46; stroke: #cf857e; stroke-width: 3; rx: 3px; }
.green rect { fill: #4a8c4a; stroke: #8cb48a; }
.yellow rect { fill: #e8dc98; stroke: #555; }
.nums { fill: #f2e6e6; font: 600 18px "Noto Sans", sans-serif; text-anchor: middle; }
.dark { fill: #333; }
.towns { fill: #2c2c30; font: 21px "Noto Sans", sans-serif; }
.big { font-size: 24px; }
.city { font-size: 27px; }
.parks { fill: #5c9a5c; font-size: 22px; }
.dots { fill: #444; }
.route { fill: none; stroke: #2c5ce0; stroke-width: 9; stroke-linejoin: round; }
.layers { position: absolute; left: 0; top: 590px; display: flex; align-items: center; justify-content: center; width: 102px; height: 68px; padding: 0; border: 0; background: #e4e4e4; color: #333; }
.layers svg { width: 54px; height: 50px; }
.route-info { position: absolute; left: 0; top: 658px; display: flex; gap: 56px; width: 524px; height: 60px; padding-left: 26px; background: #fff; }

.chat { position: absolute; right: 191px; bottom: 0; display: flex; align-items: center; justify-content: space-between; width: 522px; height: 76px; padding: 8px 28px 0 30px; border: 2px solid #999; border-bottom: 0; border-radius: 20px 20px 0 0; background: #431e45; color: #fff; font-size: 28px; }
.chat svg { width: 28px; height: 28px; }

.overlay { position: fixed; inset: 0; background: radial-gradient(ellipse at 52% 60%, rgba(20, 20, 20, .69), rgba(18, 18, 18, .73)); }

/* dialog */
.dialog { position: fixed; top: 312px; left: 486px; right: 491px; background: #fff; box-shadow: 0 8px 40px rgba(0, 0, 0, .3); }
.dialog-head { display: flex; align-items: center; gap: 42px; height: 76px; padding: 0 25px 0 24px; background: #431e45; color: #fff; }
.dialog-head h2 { flex: 1; font-size: 30px; }
.dialog-icon { width: 24px; height: 24px; padding: 1px; border: 0; background: none; }
.dialog-icon svg { width: 22px; height: 22px; }
.dialog-body { display: grid; grid-template-columns: 245px 1fr; padding: 30px 30px 60px 32px; }
.dlabel { font-size: 28px; line-height: 36px; white-space: nowrap; }
.dlabel-message { padding-top: 23px; }
.req { margin-left: 5px; color: #e0503c; font-size: 30px; }
.dialog .input { border-color: #c0c0c0; background: #fff; }
.template { grid-column: 2; padding-top: 22px; }
.template-row { display: flex; }
.message { display: block; width: 100%; height: 428px; margin-top: 24px; padding: 13px 12px 12px; border: 2px solid #e0dcdf; line-height: 40px; resize: none; overflow: hidden; }
.actions { grid-column: 2; display: flex; justify-content: flex-end; gap: 24px; margin-top: 30px; }

.fab { position: fixed; right: -34px; bottom: -8px; display: flex; align-items: center; width: 124px; height: 124px; padding: 0 0 0 34px; border: 0; border-radius: 50%; background: #431e45; box-shadow: 0 4px 16px rgba(0, 0, 0, .4); }
.fab svg { width: 48px; height: 36px; }
```
